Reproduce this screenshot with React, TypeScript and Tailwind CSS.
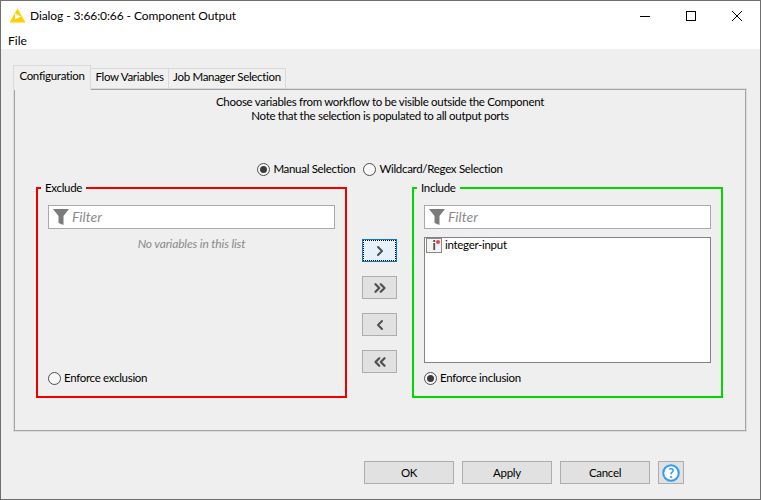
import React from "react";
import { ChevronLeft, ChevronRight, ChevronsLeft, ChevronsRight } from "lucide-react";

const font = { fontFamily: 'Lato, sans-serif' };

function Radio({ label, checked }: { label: string; checked?: boolean }) {
  return (
    <label className="flex h-[15px] items-center gap-[3px] whitespace-nowrap text-black">
      <span className="flex h-[13px] w-[13px] items-center justify-center rounded-full border border-[#4d4d4d] bg-[#f8f8f8]">
        {checked && <span className="h-[7px] w-[7px] rounded-full bg-[#3c3c3c]" />}
      </span>
      <span className="pb-[2px]">{label}</span>
    </label>
  );
}

function FilterField() {
  return (
    <div className="flex h-[24px] items-center gap-[3px] border border-[#a9a9b0] bg-white pl-[4px]">
      <svg width="16" height="16" viewBox="0 0 16 16" className="shrink-0">
        <path d="M0 0H16L10.5 7V16L5.5 14V7Z" fill="#7b7b7b" />
      </svg>
      <span className="pb-[2px] text-[14px] italic tracking-normal text-[#8a8a8a]">Filter</span>
    </div>
  );
}

function MoveButton({ focused, children }: { focused?: boolean; children: React.ReactNode }) {
  return (
    <button
      className={`flex h-[23px] w-[35px] items-center justify-center border ${
        focused
          ? "border-[#0078d7] bg-[#e5f1fb] outline-1 -outline-offset-2 outline-dotted outline-black"
          : "border-[#adadad] bg-[#e1e1e1]"
      }`}
    >
      {children}
    </button>
  );
}

function FooterButton({ label }: { label: string }) {
  return (
    <button className="h-[23px] w-[90px] border border-[#adadad] bg-[#e1e1e1] text-black">{label}</button>
  );
}

export default function App() {
  return (
    <div style={font} className="flex h-[500px] w-[761px] flex-col border border-[#6f6f6f] bg-[#efefef] text-[11.5px] leading-[15px] tracking-[-0.3px] text-black">
      {/* title bar */}
      <div className="flex h-[30px] shrink-0 items-center bg-white pl-[8px]">
        <svg width="17" height="16" viewBox="0 0 17 16" className="mr-[4px] shrink-0">
          <path d="M8.5 0.5 L16.5 14.5 H0.5 Z" fill="#fdd000" />
          <path d="M6 5.5 L12 8.5 L6 11.5 Z" fill="#ffffff" />
        </svg>
        <span className="pb-px text-[12px] tracking-[-0.08px]">Dialog - 3:66:0:66 - Component Output</span>
        <div className="ml-auto flex items-center">
          <div className="flex h-[30px] w-[46px] items-center justify-center">
            <span className="h-px w-[10px] bg-black" />
          </div>
          <div className="flex h-[30px] w-[46px] items-center justify-center">
            <span className="h-[10px] w-[10px] border border-black" />
          </div>
          <div className="flex h-[30px] w-[46px] items-center justify-center">
            <svg width="10" height="10" viewBox="0 0 10 10">
              <path d="M0 0L10 10M10 0L0 10" stroke="#000" strokeWidth="1" fill="none" />
            </svg>
          </div>
        </div>
      </div>
      {/* menu */}
      <div className="flex h-[18px] shrink-0 items-center bg-white pl-[7px] text-[12px] tracking-normal">File</div>

      {/* tabs */}
      <div className="flex flex-1 flex-col pl-[12px] pr-[13px] pt-[16px]">
        <div className="relative z-10 flex h-[24px] items-end whitespace-nowrap">
          <div className="flex h-[25px] w-[78px] translate-y-px items-center justify-center border border-b-0 border-[#d9d9d9] bg-[#efefef] pb-[6px]">
            Configuration
          </div>
          <div className="flex h-[21px] w-[78px] items-center justify-center border border-l-0 border-[#d9d9d9] bg-[#f0f0f0] pb-[4px]">
            Flow Variables
          </div>
          <div className="flex h-[21px] w-[117px] items-center justify-center border border-l-0 border-[#d9d9d9] bg-[#f0f0f0] pb-[4px]">
            Job Manager Selection
          </div>
        </div>

        {/* panel */}
        <div className="ml-px flex h-[342px] w-[732px] flex-col border border-[#a0a5a9] px-[21px] shadow-[0_0_0_1px_#dcdcdc]">
          <div className="mt-[5px] text-center leading-[14px]">
            <p>Choose variables from workflow to be visible outside the Component</p>
            <p>Note that the selection is populated to all output ports</p>
          </div>

          <div className="mt-[39px] flex justify-center gap-[8px]">
            <Radio label="Manual Selection" checked />
            <Radio label="Wildcard/Regex Selection" />
          </div>

          <div className="mt-[4px] flex gap-[15px]">
            <fieldset className="flex h-[217px] w-[311px] flex-col border-2 border-[#ee0000] px-[10px] pb-[10px]">
              <legend className="-ml-[7px] px-[4px] leading-[14px]">Exclude</legend>
              <div className="mt-[10px]">
                <FilterField />
              </div>
              <p className="mt-[7px] text-center text-[12px] italic tracking-[-0.15px] text-[#8a8a8a]">No variables in this list</p>
              <div className="mt-auto">
                <Radio label="Enforce exclusion" />
              </div>
            </fieldset>

            <div className="flex w-[35px] flex-col gap-[14px] pt-[58px]">
              <MoveButton focused>
                <ChevronRight size={16} strokeWidth={3} color="#505050" />
              </MoveButton>
              <MoveButton>
                <ChevronsRight size={18} strokeWidth={3} color="#505050" />
              </MoveButton>
              <MoveButton>
                <ChevronLeft size={16} strokeWidth={3} color="#505050" />
              </MoveButton>
              <MoveButton>
                <ChevronsLeft size={18} strokeWidth={3} color="#505050" />
              </MoveButton>
            </div>

            <fieldset className="flex h-[217px] w-[311px] flex-col border-2 border-[#00d800] px-[10px] pb-[10px]">
              <legend className="-ml-[7px] px-[4px] leading-[14px]">Include</legend>
              <div className="mt-[10px]">
                <FilterField />
              </div>
              <div className="mt-[8px] h-[126px] border border-[#82828c] bg-white pl-px">
                <div className="flex items-start gap-[3px]">
                  <span className="relative flex h-[15px] w-[16px] items-center justify-center border border-[#8a8a8a] bg-[#f4f4f4] text-[13px] font-bold leading-none text-[#444]">
                    i
                    <span className="absolute right-[1px] top-[1px] h-[4px] w-[4px] rounded-full bg-[#f04040]" />
                  </span>
                  <span className="-mt-px">integer-input</span>
                </div>
              </div>
              <div className="mt-auto">
                <Radio label="Enforce inclusion" checked />
              </div>
            </fieldset>
          </div>
        </div>

        {/* footer */}
        <div className="mt-[30px] flex items-center justify-end gap-[8px] pr-[63px]">
          <FooterButton label="OK" />
          <FooterButton label="Apply" />
          <FooterButton label="Cancel" />
          <button className="flex h-[23px] w-[26px] items-center justify-center border border-[#adadad] bg-[#e1e1e1]">
            <svg width="18" height="18" viewBox="0 0 18 18">
              <circle cx="9" cy="9" r="7.75" fill="#fff" stroke="#2d9cf4" strokeWidth="2" />
              <text x="9" y="13.5" textAnchor="middle" fontSize="13" fontWeight="700" fill="#2d9cf4" fontFamily="Lato, sans-serif">?</text>
            </svg>
          </button>
        </div>
      </div>
    </div>
  );
}
